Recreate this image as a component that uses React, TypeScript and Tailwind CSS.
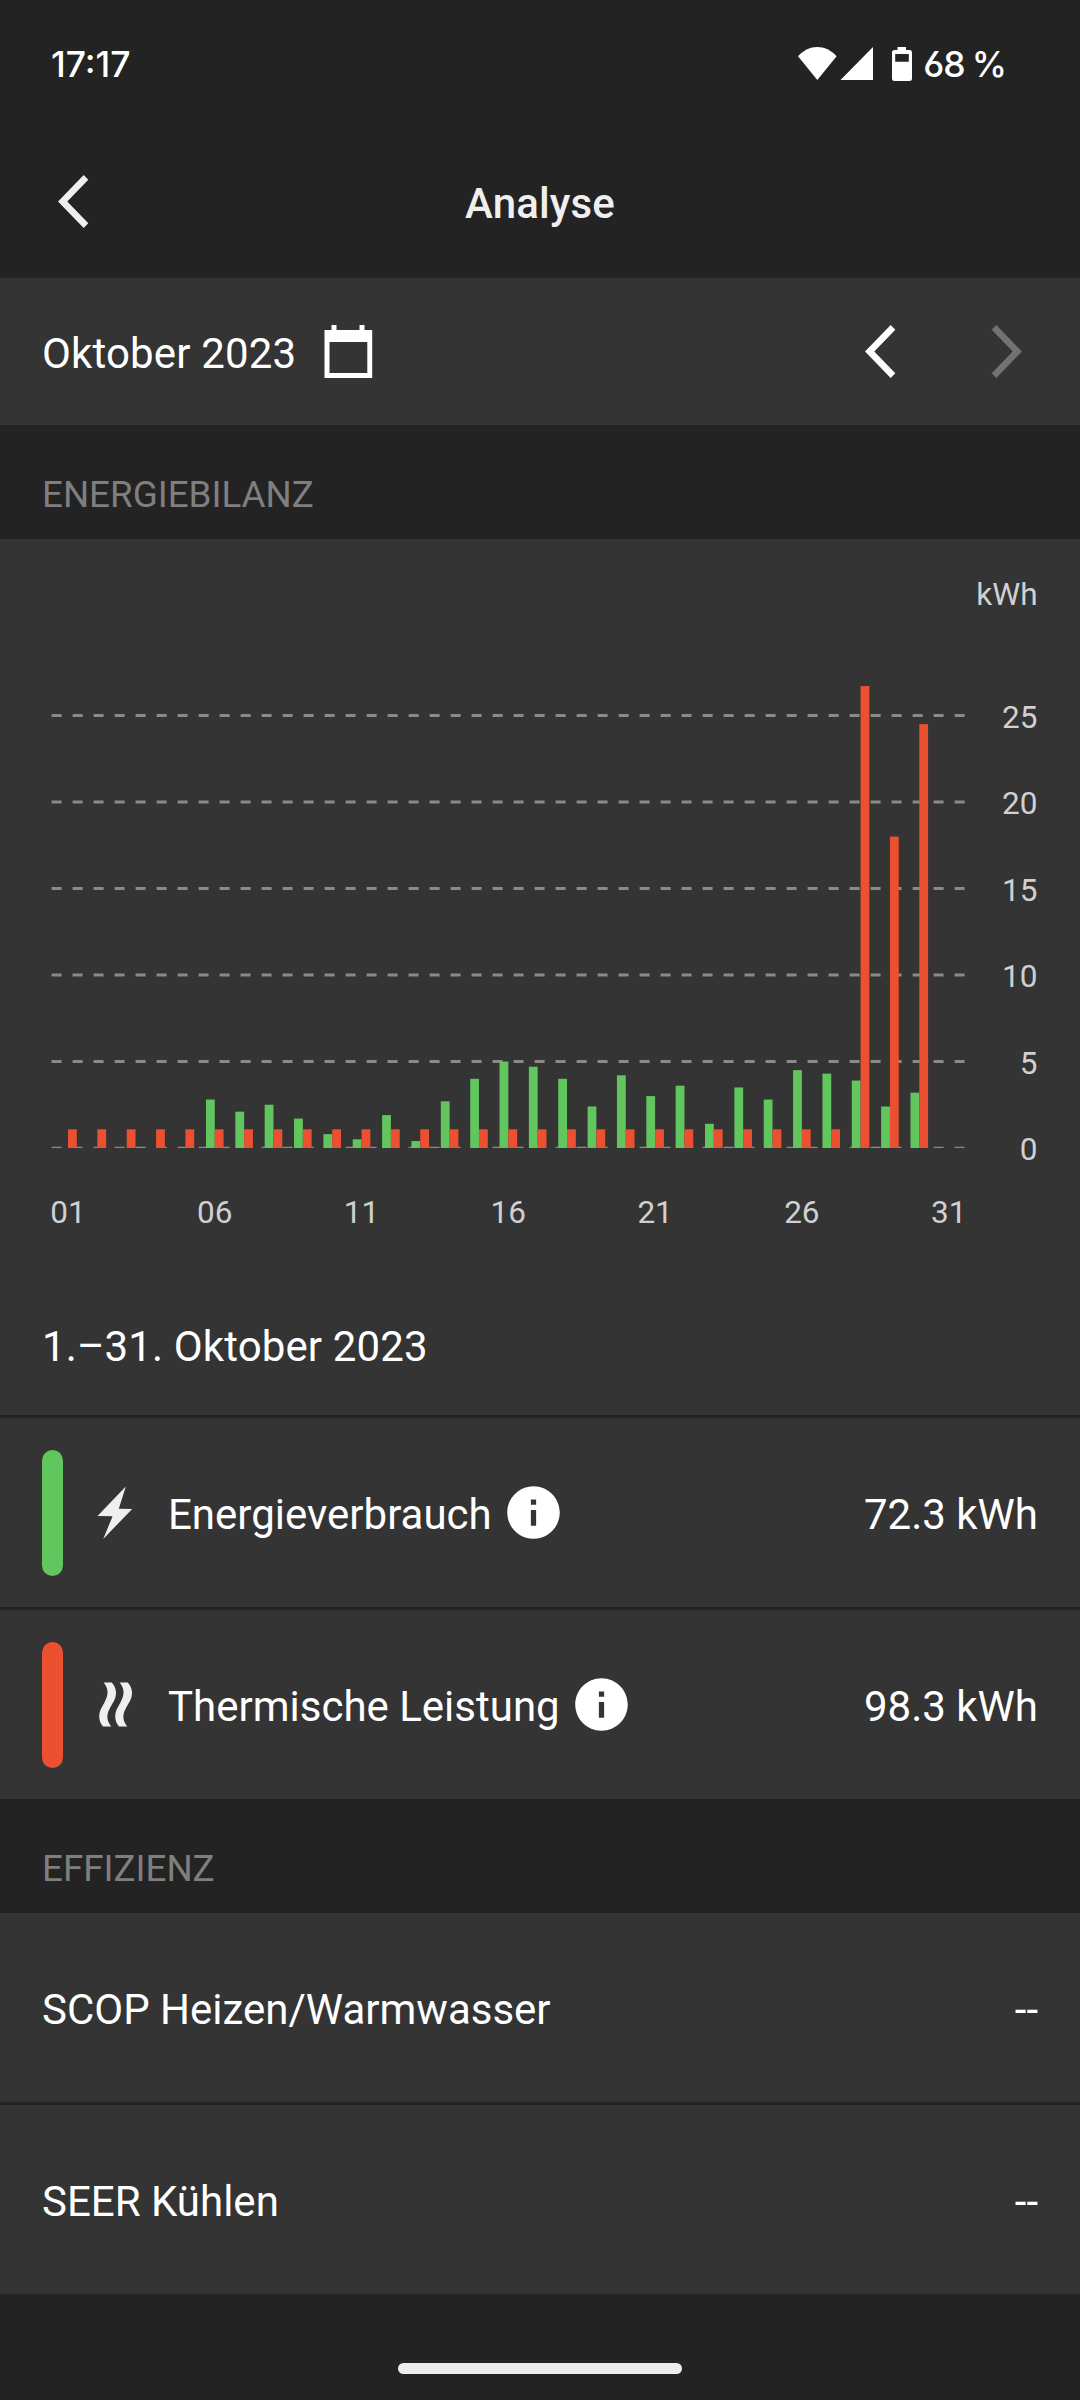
import type { ReactNode } from 'react';

type Day = { day: number; used: number; heat: number };

const used = [
  0, 0, 0, 0, 0, 2.8, 2.1, 2.5, 1.7, 0.8, 0.5, 1.9, 0.4, 2.7, 4, 5, 4.7, 4, 2.4, 4.2, 3, 3.6, 1.4, 3.5, 2.8, 4.5, 4.3,
  3.9, 2.4, 3.2, 0,
];
const heatPeaks: Record<number, number> = { 28: 26.7, 29: 18, 30: 24.5, 31: 0 };
const days: Day[] = used.map((value, i) => ({ day: i + 1, used: value, heat: heatPeaks[i + 1] ?? 1.08 }));

const BASE = 609;
const UNIT = 17.3;
const FIRST = 68;
const PITCH = 29.355;
const BAR = 8.8;

function EnergyChart() {
  return (
    <svg width="1080" height="720" viewBox="0 0 1080 720" className="block" fontSize="31.5" fill="#d0d0d0">
      <text x="1037.5" y="65.7" textAnchor="end">kWh</text>
      {[0, 5, 10, 15, 20, 25].map((v) => (
        <g key={v}>
          <line
            x1="51.6"
            x2="965"
            y1={v === 0 ? BASE - 0.65 : BASE - v * UNIT}
            y2={v === 0 ? BASE - 0.65 : BASE - v * UNIT}
            stroke="#8a8a8a"
            strokeWidth={v === 0 ? 1.3 : 2.8}
            strokeDasharray="10 11"
          />
          <text x="1037.5" y={BASE + 12.3 - v * UNIT} textAnchor="end">{v}</text>
        </g>
      ))}
      {days.map(({ day, used: u, heat }) => {
        const x = FIRST + (day - 1) * PITCH;
        return (
          <g key={day}>
            <rect x={x - BAR} y={BASE - u * UNIT} width={BAR} height={u * UNIT} fill="#62c65f" />
            <rect x={x} y={BASE - heat * UNIT} width={BAR} height={heat * UNIT} fill="#eb5130" />
            {day % 5 === 1 && (
              <text x={x} y={BASE + 75} textAnchor="middle">{String(day).padStart(2, '0')}</text>
            )}
          </g>
        );
      })}
    </svg>
  );
}

function Chevron({ className }: { className: string }) {
  return (
    <svg width="31" height="53" viewBox="0 0 31 53" className={className} fill="currentColor">
      <path d="M25.7 0 0 26.5 25.7 53 30.3 48.2 9.3 26.5 30.3 4.8Z" />
    </svg>
  );
}

function InfoIcon() {
  return (
    <svg width="63" height="63" viewBox="0 0 24 24" className="ml-[10px] shrink-0" fill="#fff">
      <path d="M12 2C6.48 2 2 6.48 2 12s4.48 10 10 10 10-4.48 10-10S17.52 2 12 2zm1 15h-2v-6h2v6zm0-8h-2V7h2v2z" />
    </svg>
  );
}

function BoltIcon() {
  return (
    <svg width="63" height="63" viewBox="0 0 63 63" fill="#efefef">
      <path d="M41.8 5.5 34.8 27.7 48.2 28 19.2 58 28.6 35.2 13.5 34.9Z" />
    </svg>
  );
}

function HeatIcon() {
  const wave =
    'M19.7 9.5H27.7C30.4 12.4 32 15.8 32 19.8C32 26.2 28.6 30.2 26.2 34.6C23.1 40.3 21.5 46.3 27.2 53.5H19C16.6 51 15.2 47.5 15.2 43.6C15.2 38.3 17.6 34.6 20.3 29.7C23.3 24.3 26.1 17.4 19.7 9.5Z';
  return (
    <svg width="63" height="63" viewBox="0 0 63 63" fill="#efefef">
      <path d={wave} />
      <path d={wave} transform="translate(16 0)" />
    </svg>
  );
}

function SectionTitle({ children }: { children: ReactNode }) {
  return (
    <h2 className="flex h-[114px] items-center bg-[#232323] px-[42px] pt-[25px] text-[36.75px] font-normal text-[#7f7f7f]">
      {children}
    </h2>
  );
}

function LegendRow({ color, icon, label, value }: { color: string; icon: ReactNode; label: string; value: string }) {
  return (
    <div className="flex h-48 items-center border-t-[3px] border-[#232323] px-[42px]">
      <span className={`h-[126px] w-[21px] rounded-full ${color}`} />
      <span className="mr-[21px] ml-[21px]">{icon}</span>
      <span className="pt-1">{label}</span>
      <InfoIcon />
      <span className="ml-auto pt-1">{value}</span>
    </div>
  );
}

function ValueRow({ label, value, className }: { label: string; value: string; className: string }) {
  return (
    <div className={`flex items-center justify-between px-[42px] pt-1 ${className}`}>
      <span>{label}</span>
      <span>{value}</span>
    </div>
  );
}

export default function App() {
  return (
    <div className="flex h-[2400px] w-[1080px] flex-col bg-[#232323] font-[Roboto,sans-serif] text-[42px] leading-[50px] text-white">
      <div className="flex h-[128px] items-center justify-between pr-[74px] pl-[51px] font-[Inter,sans-serif] text-[35.5px] font-medium">
        <span className="pt-[1px]">17:17</span>
        <div className="flex items-center">
          <svg width="115" height="35" viewBox="0 0 115 35" fill="#fff">
            <path d="M0 9.3C11-3.1 27.6-3.1 38.6 9.3L19.3 33Z" />
            <path d="M75 0V33H42.5Z" />
            <path
              fillRule="evenodd"
              d="M99.5 0H108V3H111.5Q114 3 114 5.5V32Q114 34 111.5 34H96.5Q94 34 94 32V5.5Q94 3 96.5 3H99.5ZM97.2 7V14.8H110.8V7Z"
            />
          </svg>
          <span className="ml-[10px] pt-[1px] tracking-[-1.1px] [font-feature-settings:'ss01'] [word-spacing:-1px]">68 %</span>
        </div>
      </div>

      <header className="grid h-[150px] grid-cols-3 items-center px-[58px] text-[#efefef]">
        <Chevron className="mb-1" />
        <h1 className="pt-[2px] text-center font-medium tracking-[0.15px]">Analyse</h1>
      </header>

      <div className="flex h-[147px] items-center bg-[#343434] pr-[58px] pl-[42px]">
        <span className="pt-1 tracking-[0.15px]">Oktober 2023</span>
        <svg width="49" height="53" viewBox="0 0 49 53" className="ml-[28px]" fill="#fff">
          <path fillRule="evenodd" d="M7.5 0H12.5V5H35.5V0H40.5V5H48.2V53H0.5V5H7.5ZM5.5 17V48H43.3V17Z" />
        </svg>
        <Chevron className="ml-auto" />
        <Chevron className="ml-[95px] -scale-x-100 text-[#727272]" />
      </div>

      <SectionTitle>ENERGIEBILANZ</SectionTitle>
      <div className="h-[876px] bg-[#343434]">
        <EnergyChart />
        <p className="px-[42px] pt-[63px] tracking-[0.12px]">1.–31. Oktober 2023</p>
      </div>
      <div className="bg-[#343434]">
        <LegendRow color="bg-[#62c65f]" icon={<BoltIcon />} label="Energieverbrauch" value="72.3 kWh" />
        <LegendRow color="bg-[#eb5130]" icon={<HeatIcon />} label="Thermische Leistung" value="98.3 kWh" />
      </div>

      <SectionTitle>EFFIZIENZ</SectionTitle>
      <div className="bg-[#343434]">
        <ValueRow label="SCOP Heizen/Warmwasser" value="--" className="h-[189px]" />
        <ValueRow label="SEER Kühlen" value="--" className="h-48 border-t-[3px] border-[#232323]" />
      </div>
      <div className="flex flex-1 items-end justify-center pb-[26px]">
        <span className="h-[11px] w-[284px] rounded-full bg-[#ededed]" />
      </div>
    </div>
  );
}
